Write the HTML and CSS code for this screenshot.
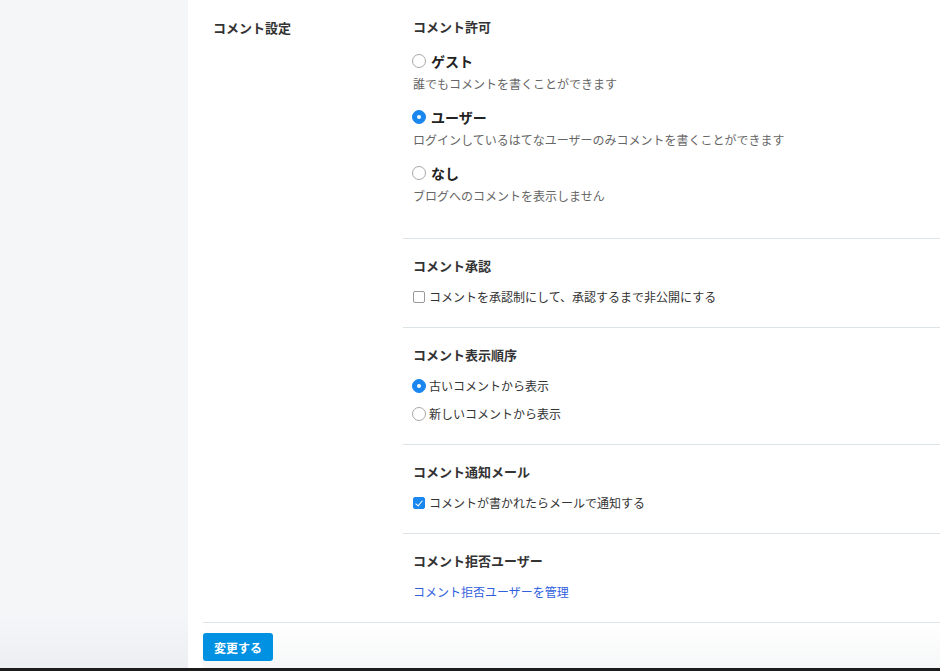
FILE: index.html
```html
<!DOCTYPE html>
<html lang="ja">
<head>
    <meta charset="UTF-8">
    <meta name="viewport" content="width=device-width, initial-scale=1.0">
    <title>コメント設定</title>
    <link rel="stylesheet" href="styles.css">
</head>
<body>
    <div class="layout">
        <div class="sidebar"></div>

        <form class="main">
            <div class="setting-row">
                <div class="setting-label">コメント設定</div>

                <div class="setting-body">
                    <div class="section">
                        <h3>コメント許可</h3>
                        <div class="option">
                            <label class="option-title"><input type="radio" name="permit" class="radio"> ゲスト</label>
                            <p class="option-desc">誰でもコメントを書くことができます</p>
                        </div>
                        <div class="option">
                            <label class="option-title"><input type="radio" name="permit" class="radio" checked> ユーザー</label>
                            <p class="option-desc">ログインしているはてなユーザーのみコメントを書くことができます</p>
                        </div>
                        <div class="option">
                            <label class="option-title"><input type="radio" name="permit" class="radio"> なし</label>
                            <p class="option-desc">ブログへのコメントを表示しません</p>
                        </div>
                    </div>

                    <div class="section">
                        <h3>コメント承認</h3>
                        <label class="check-row"><input type="checkbox" class="checkbox">コメントを承認制にして、承認するまで非公開にする</label>
                    </div>

                    <div class="section">
                        <h3>コメント表示順序</h3>
                        <label class="check-row"><input type="radio" name="order" class="radio" checked>古いコメントから表示</label>
                        <label class="check-row"><input type="radio" name="order" class="radio">新しいコメントから表示</label>
                    </div>

                    <div class="section">
                        <h3>コメント通知メール</h3>
                        <label class="check-row"><input type="checkbox" class="checkbox" checked>コメントが書かれたらメールで通知する</label>
                    </div>

                    <div class="section">
                        <h3>コメント拒否ユーザー</h3>
                        <a href="#" class="manage-link">コメント拒否ユーザーを管理</a>
                    </div>
                </div>
            </div>

            <div class="footer">
                <button type="submit" class="save-btn">変更する</button>
            </div>
        </form>
    </div>
    <div class="window-edge"></div>
</body>
</html>
```

FILE: styles.css
```css
body {
    margin: 0;
    padding: 0;
    font-family: "Noto Sans CJK JP", "Noto Sans", sans-serif;
    background-color: #f5f6f8;
    color: #333;
}

.layout {
    display: flex;
    height: 668px;
    overflow: hidden;
}

.sidebar {
    width: 188px;
    flex-shrink: 0;
    background: linear-gradient(to bottom, #f5f6f8 92%, #eceef1 100%);
}

.main {
    flex: 1;
    background-color: white;
    padding-left: 15px;
    display: flex;
    flex-direction: column;
}

.setting-row {
    display: flex;
}

.setting-label {
    width: 190px;
    padding: 17px 0 0 10px;
    font-size: 13px;
    line-height: 22px;
    font-weight: bold;
    color: #333;
}

.setting-body {
    flex: 1;
}

.section {
    padding: 17px 0 20px 10px;
    border-bottom: 1px solid #dde4e8;
    display: flex;
    flex-direction: column;
    align-items: flex-start;
}

.section:last-child {
    border-bottom: none;
}

h3 {
    margin: 0 0 11px 0;
    font-size: 13px;
    line-height: 20px;
    font-weight: bold;
    color: #333;
}

.section:first-child h3 {
    margin-bottom: 13px;
}

.option {
    margin-bottom: 13px;
}

.option-title {
    display: flex;
    align-items: center;
    gap: 5px;
    font-size: 14px;
    line-height: 22px;
    font-weight: bold;
    color: #222;
    margin-left: -1px;
}

.option-desc {
    margin: 3px 0 0 0;
    font-size: 12px;
    line-height: 18px;
    color: #666;
}

.check-row {
    display: flex;
    align-items: center;
    gap: 3px;
    font-size: 12px;
    line-height: 20px;
    color: #333;
    margin-bottom: 8px;
}

.check-row:last-child {
    margin-bottom: 0;
}

.radio {
    appearance: none;
    -webkit-appearance: none;
    margin: 0;
    width: 14px;
    height: 14px;
    border: 1px solid #a8a8a8;
    border-radius: 50%;
    background-color: white;
    box-sizing: border-box;
    flex-shrink: 0;
    position: relative;
}

.check-row .radio {
    margin-left: -1px;
}

.radio:checked {
    background-color: #1a86f0;
    border-color: #1a86f0;
}

.radio:checked::after {
    content: "";
    position: absolute;
    left: 4px;
    top: 4px;
    width: 4px;
    height: 4px;
    border-radius: 50%;
    background-color: white;
}

.checkbox {
    appearance: none;
    -webkit-appearance: none;
    margin: 0 1px 0 0;
    width: 12px;
    height: 12px;
    border: 1px solid #9a9a9a;
    border-radius: 2px;
    background-color: white;
    box-sizing: border-box;
    flex-shrink: 0;
    position: relative;
}

.checkbox:checked {
    background-color: #1a86f0;
    border-color: #1a86f0;
}

.checkbox:checked::after {
    content: "";
    position: absolute;
    left: 3px;
    top: 1px;
    width: 3px;
    height: 6px;
    border: solid white;
    border-width: 0 1.5px 1.5px 0;
    transform: rotate(40deg);
}

.manage-link {
    font-size: 12px;
    line-height: 20px;
    color: #3060dd;
    text-decoration: none;
}

.footer {
    border-top: 1px solid #dde4e8;
    padding-top: 10px;
    flex: 1;
    background: linear-gradient(to bottom, #ffffff 0%, #f6f7f8 100%);
}

.save-btn {
    width: 70px;
    height: 28px;
    border: none;
    border-radius: 3px;
    background-color: #0091e2;
    color: white;
    font-family: "Noto Sans CJK JP", sans-serif;
    font-size: 12px;
    font-weight: bold;
    cursor: pointer;
    padding: 0;
}

.save-btn:hover {
    background-color: #0082cc;
}

.window-edge {
    height: 3px;
    background-color: #1c1c1c;
}
```
